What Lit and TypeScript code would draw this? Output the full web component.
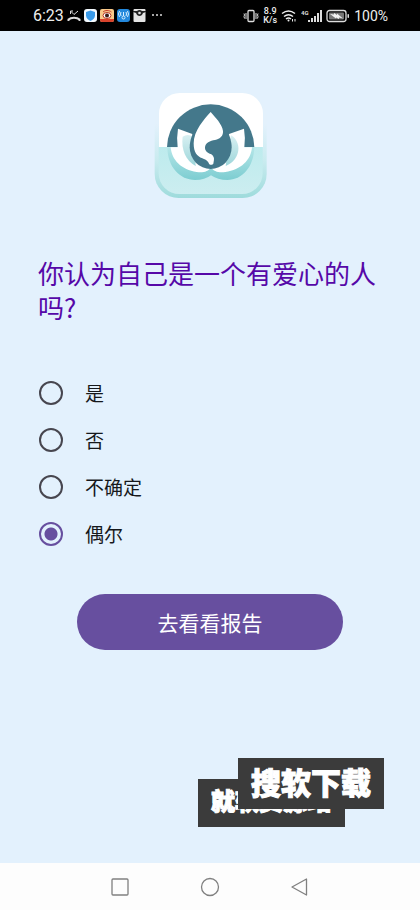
import { LitElement, html, css, svg } from "lit";
import { customElement, state } from "lit/decorators.js";

const OPTIONS = ["是", "否", "不确定", "偶尔"];

@customElement("status-bar")
class StatusBar extends LitElement {
  static styles = css`
    :host {
      display: flex;
      align-items: center;
      justify-content: space-between;
      height: 31px;
      padding: 0 32px 0 33px;
      background: #000;
      color: #eee;
      font-family: Roboto, sans-serif;
    }
    .group { display: flex; align-items: center; gap: 3px; }
    .group.end { gap: 4px; }
    .time { font-size: 16px; }
    .percent { font-size: 14px; }
    .rate { font-size: 9px; line-height: 9px; text-align: center; font-weight: 500; }
    svg { display: block; }
  `;
  render() {
    return html`
      <div class="group">
        <span class="time">6:23</span>
        <svg width="14" height="14" viewBox="0 0 14 14" fill="none" stroke="#ddd">
          <path d="M1.5 12V10.5C4 8 10 8 12.500 10.500V12" stroke-width="2"/>
          <path d="M3.500 5V2M3.500 2H6M4 2.500L7 5.500L11 2" stroke-width="1"/>
        </svg>
        <svg width="13" height="13" viewBox="0 0 13 13">
          <rect width="13" height="13" rx="3" fill="#f4faff"/>
          <path d="M6.500 1.500L11 3V6.500C11 9 9 11 6.500 12C4 11 2 9 2 6.500V3Z" fill="#3a9bea"/>
        </svg>
        <svg width="14" height="13" viewBox="0 0 14 13">
          <rect width="14" height="13" rx="2" fill="#f8c98a"/>
          <path d="M0 10H14V11Q14 13 12 13H2Q0 13 0 11Z" fill="#d9432c"/>
          <ellipse cx="7" cy="6.500" rx="4" ry="3" fill="#fff" stroke="#b93624"/>
          <circle cx="7" cy="6.500" r="2" fill="#3b1a15"/>
          <path d="M3 3C5 1 9 1 11.500 3" fill="none" stroke="#c63b28"/>
        </svg>
        <svg width="13" height="13" viewBox="0 0 13 13" fill="none" stroke="#d9f0ff">
          <rect width="13" height="13" rx="3" fill="#2388dc" stroke="none"/>
          <circle cx="6.500" cy="8.500" r="1.500"/>
          <path d="M6.500 3V7M4 3Q3 5 4 7M9 3Q10 5 9 7M2.500 2Q0.500 5 2.500 8M10.500 2Q12.500 5 10.500 8"/>
        </svg>
        <svg width="13" height="13" viewBox="0 0 13 13">
          <rect x="0.500" width="12" height="13" rx="1" fill="#e4e4e4"/>
          <path d="M0 2H4Q6.500 0 9 2H13V3L10 4Q9 7 6.500 7Q4 7 3 4L0 3Z" fill="#222"/>
          <circle cx="6.500" cy="4" r="1.300" fill="#e4e4e4"/>
        </svg>
        <svg width="16" height="13" viewBox="0 0 16 13" fill="#ddd">
          <circle cx="4" cy="6" r="1"/><circle cx="8" cy="6" r="1"/><circle cx="12" cy="6" r="1"/>
        </svg>
      </div>
      <div class="group end">
        <svg width="16" height="14" viewBox="0 0 16 14" fill="none" stroke="#ddd">
          <rect x="5" y="1.500" width="6" height="11" rx="1" stroke-width="1.300"/>
          <path d="M3 4V10M13 4V10M1 4.500L1.500 6L1 7.500L1.500 9.500M15 4.500L14.500 6L15 7.500L14.500 9.500"/>
        </svg>
        <div class="rate">8.9<br />K/s</div>
        <svg width="16" height="14" viewBox="0 0 16 14" fill="none" stroke="#eee" stroke-width="1.500">
          <path d="M1 4.500Q7.500 -0.500 14 4.500M3 7.500Q7.500 4 12 7.500M5 10Q7.500 8 10 10"/>
          <circle cx="7.500" cy="11.500" r="1" fill="#eee" stroke="none"/>
          <path d="M11.500 10V12.500M14 10V12.500" stroke-width="1"/>
        </svg>
        <svg width="21" height="14" viewBox="0 0 21 14" fill="#ddd">
          <text x="0" y="6" font-size="6" font-weight="700">4G</text>
          <path d="M7 11H9V13H7ZM10 9H12V13H10ZM13 7H15V13H13ZM16 4H18V13H16ZM19 1H21V13H19Z"/>
        </svg>
        <svg width="24" height="14" viewBox="0 0 24 14">
          <rect x="1" y="1.500" width="19" height="11" rx="2.500" fill="none" stroke="#ddd" stroke-width="1.300"/>
          <rect x="3" y="3.500" width="15" height="7" rx="1" fill="#777"/>
          <path d="M4 5L8 5.500L8 4L11 6V4.500L17 9.500L13 8.500V10L10 8.500V9.500Z" fill="#f2f2f2"/>
          <rect x="21.500" y="5" width="1.500" height="4" rx="0.700" fill="#ddd"/>
        </svg>
        <span class="percent">100%</span>
      </div>
    `;
  }
}

@customElement("app-logo")
class AppLogo extends LitElement {
  static styles = css`
    :host { display: block; }
    svg { display: block; }
  `;
  render() {
    return svg`
      <svg width="130" height="130" viewBox="0 0 390 390" role="img" aria-label="logo">
        <defs>
          <linearGradient id="water" x1="0" y1="0" x2="0" y2="1">
            <stop offset="0.500" stop-color="#bcebed"/><stop offset="1" stop-color="#ccedf0"/>
          </linearGradient>
          <linearGradient id="rim" x1="0" y1="0" x2="0" y2="1">
            <stop offset="0.300" stop-color="#e3f1fc"/><stop offset="0.650" stop-color="#c9ebef"/><stop offset="1" stop-color="#9edbdc"/>
          </linearGradient>
          <linearGradient id="bowl" x1="0" y1="0" x2="0" y2="1">
            <stop offset="0" stop-color="#b4e6e8"/><stop offset="1" stop-color="#7dcdd1"/>
          </linearGradient>
          <linearGradient id="leaf" x1="0" y1="0" x2="0" y2="1">
            <stop offset="0" stop-color="#d8f0f2"/><stop offset="1" stop-color="#9dd6da"/>
          </linearGradient>
          <clipPath id="top"><rect width="390" height="201"/></clipPath>
          <clipPath id="bottom"><rect y="201" width="390" height="189"/></clipPath>
        </defs>
        <rect x="29" y="36" width="336" height="318" rx="72" fill="url(#rim)"/>
        <rect x="41" y="38" width="312" height="304" rx="62" fill="url(#water)" clip-path="url(#bottom)"/>
        <rect x="42" y="39" width="312" height="303" rx="62" fill="#fff" clip-path="url(#top)"/>
        <circle cx="197" cy="204" r="131" fill="#44788b" clip-path="url(#top)"/>
        <path d="M67 202C68 262 105 300 150 300Q180 300 198 286Q218 300 247 300C292 300 326 262 328 202Z" fill="url(#bowl)"/>
        <path d="M99 146L142 162L160 210L198 262C190 276 172 279 155 276C110 270 80 240 77 202H98Q94 175 99 146Z" fill="#fff"/>
        <path d="M297 146L252 162L236 210L198 262C206 276 224 279 241 276C288 270 318 240 321 202H298Q302 175 297 146Z" fill="#fff"/>
        <path d="M113 170C108 208 122 242 152 258L145 170Q128 160 113 170Z" fill="url(#leaf)"/>
        <path d="M258 166C290 184 290 238 242 258L250 200Z" fill="url(#leaf)"/>
        <path d="M197 88C170 110 134 160 134 202A63 65 0 0 0 260 202C260 160 224 110 197 88Z" fill="#44788b"/>
        <path d="M197 96C178 117 146 152 146 190C146 218 156 229 172 235C186 240 190 246 193 253Q199 257 205 251Q211 230 199 223C185 218 180 211 180 203C180 188 196 182 210 180C226 177 235 167 234 153C232 133 210 111 197 96Z" fill="#fff"/>
      </svg>
    `;
  }
}

@customElement("app-root")
class AppRoot extends LitElement {
  static styles = css`
    :host {
      display: flex;
      flex-direction: column;
      min-height: 100vh;
      background: #e3f1fd;
      color: #16181b;
      font-family: "Noto Sans CJK SC", sans-serif;
    }
    main {
      flex: 1;
      display: flex;
      flex-direction: column;
      padding: 49px 36px 36px;
    }
    app-logo { align-self: center; }
    h1 {
      margin: 46px 2px 0;
      font-size: 26px;
      line-height: 34px;
      font-weight: 400;
      color: #5608a8;
    }
    fieldset {
      margin: 45px 2px 0;
      padding: 0;
      border: 0;
    }
    label {
      display: flex;
      align-items: center;
      gap: 21px;
      height: 47px;
      font-size: 19px;
    }
    input {
      appearance: none;
      box-sizing: border-box;
      width: 24px;
      height: 24px;
      margin: 0 1px;
      border: 2px solid #47464f;
      border-radius: 50%;
    }
    input:checked {
      border-color: #674f9f;
      background: radial-gradient(circle, #674f9f 6px, transparent 7px);
    }
    .report {
      align-self: center;
      width: 266px;
      height: 56px;
      margin-top: 37px;
      border: 0;
      border-radius: 28px;
      background: #674f9f;
      color: #fff;
      font-family: inherit;
      font-size: 21px;
    }
    .stamp {
      display: grid;
      align-self: flex-end;
      margin-top: auto;
      width: 186px;
      grid-template: 21px 30px 18px / 40px 107px 39px;
      font-weight: 900;
      color: #fff;
      -webkit-text-stroke: 1px #fff;
    }
    .stamp span {
      display: flex;
      align-items: center;
      background: #3b3b3b;
      white-space: nowrap;
    }
    .back {
      grid-area: 2 / 1 / 4 / 3;
      padding-left: 13px;
      padding-bottom: 6px;
      font-size: 24px;
      line-height: 24px;
    }
    .front {
      grid-area: 1 / 2 / 3 / 4;
      justify-content: center;
      font-size: 30px;
      line-height: 30px;
      padding-bottom: 6px;
    }
    nav {
      display: flex;
      justify-content: center;
      align-items: center;
      gap: 66px;
      height: 47px;
      background: #fdfdfd;
    }
    nav button {
      width: 24px;
      height: 24px;
      padding: 0;
      border: 0;
      background: none;
    }
    nav svg { display: block; fill: none; stroke: #808080; stroke-width: 1.300; }
  `;

  @state() private choice = 3;

  render() {
    return html`
      <status-bar></status-bar>
      <main>
        <app-logo></app-logo>
        <h1 id="question">你认为自己是一个有爱心的人吗?</h1>
        <fieldset aria-labelledby="question">
          ${OPTIONS.map(
            (text, i) => html`
              <label>
                <input type="radio" name="answer" .checked=${this.choice === i} @change=${() => (this.choice = i)} />
                ${text}
              </label>
            `
          )}
        </fieldset>
        <button class="report" type="button">去看看报告</button>
        <div class="stamp">
          <span class="back">就软资源站</span>
          <span class="front">搜软下载</span>
        </div>
      </main>
      <nav>
        <button type="button" aria-label="recent">
          <svg width="24" height="24"><rect x="4" y="4" width="16" height="16" rx="1" /></svg>
        </button>
        <button type="button" aria-label="home">
          <svg width="24" height="24"><circle cx="12" cy="12" r="8.500" /></svg>
        </button>
        <button type="button" aria-label="back">
          <svg width="24" height="24"><path d="M18.500 4V20L4 12Z" stroke-linejoin="round" /></svg>
        </button>
      </nav>
    `;
  }
}
